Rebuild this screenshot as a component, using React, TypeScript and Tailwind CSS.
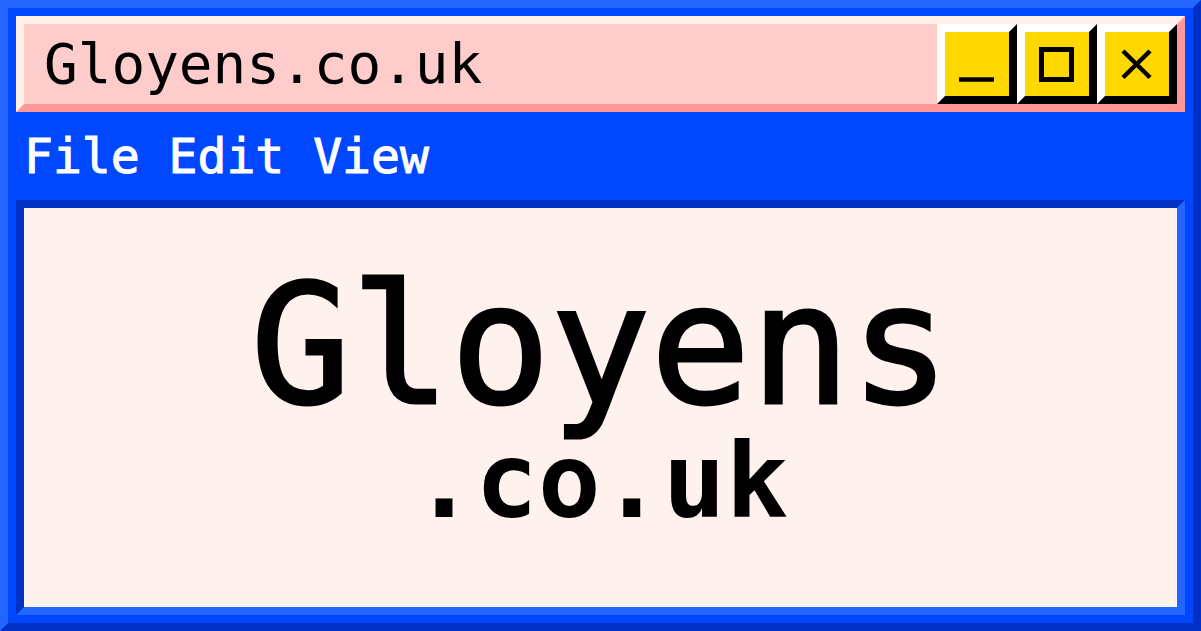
const mono = "font-['DejaVu_Sans_Mono',monospace]";

function WinButton({ children }: { children: React.ReactNode }) {
  return (
    <div className="w-20 h-20 border-8 border-t-white border-l-white border-b-black border-r-black bg-[#ffd800]">
      <svg viewBox="0 0 64 64" className="w-16 h-16" fill="none" stroke="#000">
        {children}
      </svg>
    </div>
  );
}

export default function App() {
  return (
    <div className={`w-[1201px] h-[631px] border-8 border-t-[#2266ff] border-l-[#2266ff] border-b-[#0030c4] border-r-[#0030c4] bg-[#0048ff] p-2 flex flex-col ${mono}`}>
      {/* title bar */}
      <div className="h-24 shrink-0 border-8 border-t-[#fff0ec] border-l-[#fff0ec] border-b-[#ff9999] border-r-[#ff9999] bg-[#ffcccc] flex items-center">
        <div className="flex-1 pl-5 text-[56px] leading-none text-black">Gloyens.co.uk</div>
        <div className="flex">
          <WinButton>
            <line x1="14" y1="47.5" x2="49" y2="47.5" strokeWidth="4.5" />
          </WinButton>
          <WinButton>
            <rect x="16.5" y="17.5" width="30" height="30" strokeWidth="5" />
          </WinButton>
          <WinButton>
            <path d="M18 19 L45 45.5 M45 19 L18 45.5" strokeWidth="4.5" />
          </WinButton>
        </div>
      </div>

      {/* menu */}
      <div className="h-[88px] shrink-0 flex items-center pl-2 text-[48px] leading-none text-white gap-[29px] [-webkit-text-stroke:1px_white]">
        <span>File</span>
        <span>Edit</span>
        <span>View</span>
      </div>

      {/* content */}
      <div className="flex-1 border-8 border-t-[#0030c4] border-l-[#0030c4] border-b-[#2266ff] border-r-[#2266ff] bg-[#fff1ee] flex flex-col items-center pt-[55px] text-black">
        <div className="text-[166px] leading-none [-webkit-text-stroke:3px_black]">Gloyens</div>
        <div className="text-[104px] leading-none font-bold">.co.uk</div>
      </div>
    </div>
  );
}
